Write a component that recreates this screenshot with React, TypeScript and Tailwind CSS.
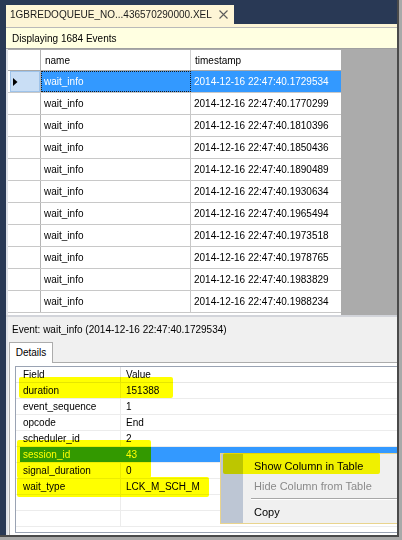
import React from "react";

const stamps = [
  "1729534",
  "1770299",
  "1810396",
  "1850436",
  "1890489",
  "1930634",
  "1965494",
  "1973518",
  "1978765",
  "1983829",
  "1988234",
];

const fields: [string, string][] = [
  ["duration", "151388"],
  ["event_sequence", "1"],
  ["opcode", "End"],
  ["scheduler_id", "2"],
  ["session_id", "43"],
  ["signal_duration", "0"],
  ["wait_type", "LCK_M_SCH_M"],
  ["", ""],
  ["", ""],
];

function Grid() {
  return (
    <div className="w-[333px] flex flex-col bg-white">
      <div className="flex h-[21px] border-b border-[#a9a9a9]">
        <div className="w-[33px] border-r border-[#b4b4b4]" />
        <div className="w-[150px] border-r border-[#d0d0d0] pl-[4px] flex items-center">name</div>
        <div className="w-[150px] pl-[4px] flex items-center">timestamp</div>
      </div>
      {stamps.map((s, i) => {
        const sel = i === 0;
        return (
          <div key={s} className="flex h-[22px] border-b border-[#c8c8c8]">
            <div className="w-[33px] border-r border-[#b4b4b4] flex items-stretch">
              {sel ? (
                <div className="flex-1 ml-[2px] bg-[#c9def5] border border-[#9ec3ea] flex items-center pl-[2px]">
                  <svg width="5" height="8" viewBox="0 0 5 8">
                    <path d="M0 0 L4.5 4 L0 8 Z" fill="#000" />
                  </svg>
                </div>
              ) : null}
            </div>
            <div
              className={
                sel
                  ? "w-[150px] bg-[#3399ff] text-white pl-[3px] flex items-center outline-1 outline-dotted outline-[#1a1a1a] -outline-offset-1"
                  : "w-[150px] border-r border-[#c8c8c8] pl-[3px] flex items-center"
              }
            >
              wait_info
            </div>
            <div
              className={
                sel
                  ? "w-[150px] bg-[#3399ff] text-white pl-[3px] flex items-center"
                  : "w-[150px] pl-[3px] flex items-center"
              }
            >
              2014-12-16 22:47:40.{s}
            </div>
          </div>
        );
      })}
    </div>
  );
}

function DetailsList() {
  return (
    <div className="flex-1 border border-r-0 border-[#9aa3b3] bg-white flex flex-col overflow-hidden">
      <div className="flex h-[16px] border-b border-[#e6e6e6]">
        <div className="w-[105px] border-r border-[#e0e0e0] pl-[7px] flex items-center">Field</div>
        <div className="flex-1 pl-[5px] flex items-center">Value</div>
      </div>
      {fields.map(([f, v], i) => {
        const sel = f === "session_id";
        return (
          <div key={i} className="flex h-[16px] border-b border-[#ececec]">
            <div className="w-[4px]" />
            <div
              className={
                "w-[101px] border-r pl-[3px] flex items-center " +
                (sel ? "bg-[#3399ff] text-white border-[#3399ff]" : "border-[#ececec]")
              }
            >
              {f}
            </div>
            <div
              className={
                "flex-1 pl-[5px] flex items-center " + (sel ? "bg-[#3399ff] text-white" : "")
              }
            >
              {v}
            </div>
          </div>
        );
      })}
    </div>
  );
}

export default function App() {
  return (
    <div className="w-[402px] h-[540px] bg-[#a9a9a9] overflow-hidden font-['Liberation_Sans',Arial,sans-serif] text-[10px] text-[#000]">
      <div className="w-[399px] h-[537px] bg-[#293955] border-r-2 border-b-2 border-[#4a4a4a] flex flex-col overflow-hidden relative">
        {/* document tab */}
        <div className="h-[24px] flex items-end pl-[6px] shrink-0">
          <div className="w-[228px] h-[19px] bg-[#fdf5d6] flex items-center pl-[4px] text-[#1b1b1b]">
            <span className="flex-1">1GBREDOQUEUE_NO...436570290000.XEL</span>
            <svg width="9" height="9" viewBox="0 0 9 9" className="mr-[6px]">
              <path d="M0.5 0.5 L8.5 8.5 M8.5 0.5 L0.5 8.5" stroke="#5c5c5c" strokeWidth="1.1" />
            </svg>
          </div>
        </div>

        <div className="flex-1 flex flex-col ml-[6px]">
          <div className="h-[3px] bg-[#fdf5d6]" />
          <div className="h-[1px] bg-[#b9b9b9]" />
          <div className="h-[20px] bg-[#ffffe1] flex items-center pl-[6px]">Displaying 1684 Events</div>
          <div className="h-[1px] bg-[#a0a0a0]" />

          {/* grid */}
          <div className="h-[266px] pt-[1px] flex bg-[#ababab] border-l-2 border-[#dfe2e8] overflow-hidden">
            <Grid />
          </div>
          <div className="h-[2px] bg-[#d2d4da]" />

          {/* bottom panel */}
          <div className="flex-1 flex flex-col bg-[#f0f0f0] border-l-2 border-[#dfe2e8]">
            <div className="h-[25px] flex items-center pl-[4px]">
              Event: wait_info (2014-12-16 22:47:40.1729534)
            </div>
            <div className="flex pl-[1px]">
              <div className="relative z-10 w-[44px] h-[21px] -mb-[1px] bg-white border border-b-0 border-[#acacac] flex items-center justify-center pb-[1px]">
                Details
              </div>
            </div>
            <div className="flex-1 ml-[1px] border-t border-l border-[#acacac] bg-white pl-[5px] pt-[3px] pb-[2px] flex flex-col">
              <DetailsList />
            </div>
          </div>
        </div>

        {/* context menu */}
        <div className="absolute left-[220px] top-[453px] w-[200px] h-[71px] bg-[#f0f0f0] border border-[#e9d48e] flex text-[11px]">
          <div className="w-[22px] bg-[#bdc6d4]" />
          <div className="flex-1 flex flex-col pt-[2px]">
            <div className="h-[20px] flex items-center pl-[11px]">Show Column in Table</div>
            <div className="h-[20px] flex items-center pl-[11px] text-[#8a8a8a]">Hide Column from Table</div>
            <div className="h-[6px] flex flex-col justify-center pl-[8px]">
              <div className="h-[1px] bg-[#a8a8a8]" />
              <div className="h-[1px] bg-white" />
            </div>
            <div className="h-[20px] flex items-center pl-[11px]">Copy</div>
          </div>
        </div>

        {/* yellow marker highlights */}
        <div className="absolute left-[19px] top-[377px] w-[154px] h-[21px] bg-[#ffff00] mix-blend-multiply rounded-[2px]" />
        <div className="absolute left-[17px] top-[440px] w-[134px] h-[38px] bg-[#ffff00] mix-blend-multiply rounded-[2px]" />
        <div className="absolute left-[17px] top-[477px] w-[192px] h-[20px] bg-[#ffff00] mix-blend-multiply rounded-[2px]" />
        <div className="absolute left-[223px] top-[453px] w-[157px] h-[21px] bg-[#ffff00] mix-blend-multiply rounded-[2px]" />
      </div>
    </div>
  );
}
